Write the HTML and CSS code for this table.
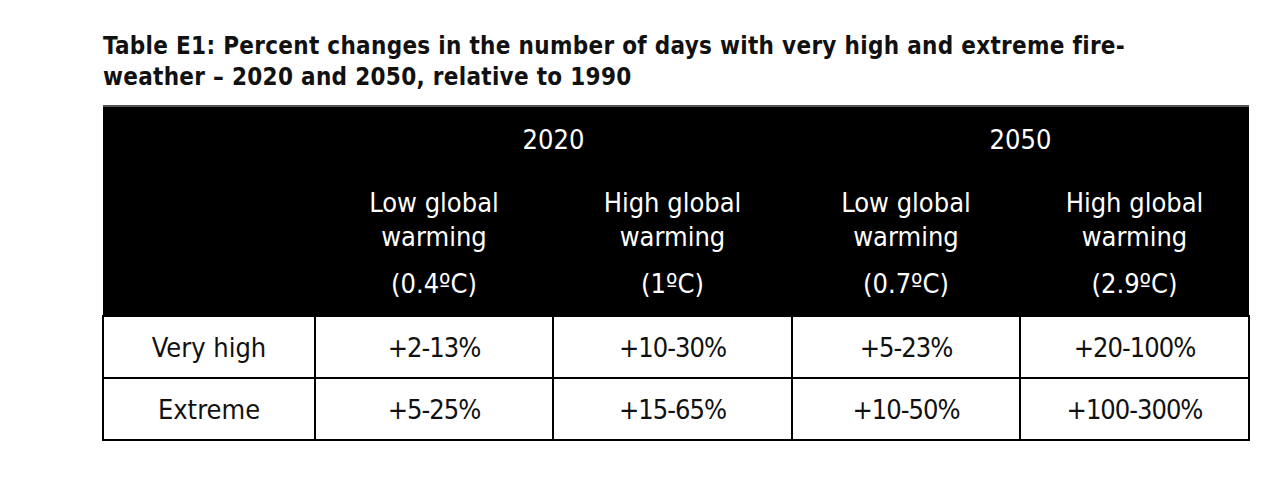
FILE: index.html
```html
<!DOCTYPE html>
<html>
<head>
<meta charset="utf-8">
<link rel="stylesheet" href="styles.css">
</head>
<body>
<div class="page">
  <h1 class="title">Table E1: Percent changes in the number of days with very high and extreme fire-<br>weather &ndash; 2020 and 2050, relative to 1990</h1>
  <table class="data">
    <colgroup>
      <col class="c1"><col class="c2"><col class="c3"><col class="c4"><col class="c5">
    </colgroup>
    <thead>
      <tr class="year-row">
        <th></th>
        <th colspan="2">2020</th>
        <th colspan="2">2050</th>
      </tr>
      <tr class="label-row">
        <th></th>
        <th><div class="lbl">Low global<br>warming</div><div class="deg">(0.4ºC)</div></th>
        <th><div class="lbl">High global<br>warming</div><div class="deg">(1ºC)</div></th>
        <th><div class="lbl">Low global<br>warming</div><div class="deg">(0.7ºC)</div></th>
        <th><div class="lbl">High global<br>warming</div><div class="deg">(2.9ºC)</div></th>
      </tr>
    </thead>
    <tbody>
      <tr>
        <td>Very high</td><td class="num">+2-13%</td><td class="num">+10-30%</td><td class="num">+5-23%</td><td class="num">+20-100%</td>
      </tr>
      <tr>
        <td>Extreme</td><td class="num">+5-25%</td><td class="num">+15-65%</td><td class="num">+10-50%</td><td class="num">+100-300%</td>
      </tr>
    </tbody>
  </table>
</div>
</body>
</html>
```
FILE: styles.css
```css
html, body {
  margin: 0;
  padding: 0;
  background: #ffffff;
}
body {
  font-family: "DejaVu Sans Condensed", "DejaVu Sans", sans-serif;
  color: #000;
}
.page {
  padding: 31px 0 0 103px;
}
.title {
  margin: 0;
  font-size: 24px;
  font-weight: bold;
  line-height: 31px;
  color: #111;
  letter-spacing: 0.3px;
}
.data {
  margin-top: 12px;
  border-collapse: collapse;
  table-layout: fixed;
  width: 1146px;
  margin-left: -1px;
  font-size: 27px;
}
.c1 { width: 212px; }
.c2 { width: 238px; }
.c3 { width: 239px; }
.c4 { width: 228px; }
.c5 { width: 229px; }
.data thead th {
  background: #000;
  color: #fff;
  font-weight: normal;
  text-align: center;
  padding: 0;
}
.data thead tr.year-row th {
  height: 65px;
  border-top: 2px solid #555;
}
.data thead tr.label-row th {
  height: 143px;
}
.lbl {
  line-height: 34px;
}
.deg {
  margin-top: 13px;
  line-height: 34px;
}
.data tbody td {
  border: 2px solid #000;
  height: 60px;
  text-align: center;
  padding: 0;
  color: #111;
}
.data tbody td.num {
  letter-spacing: -1px;
}
```
